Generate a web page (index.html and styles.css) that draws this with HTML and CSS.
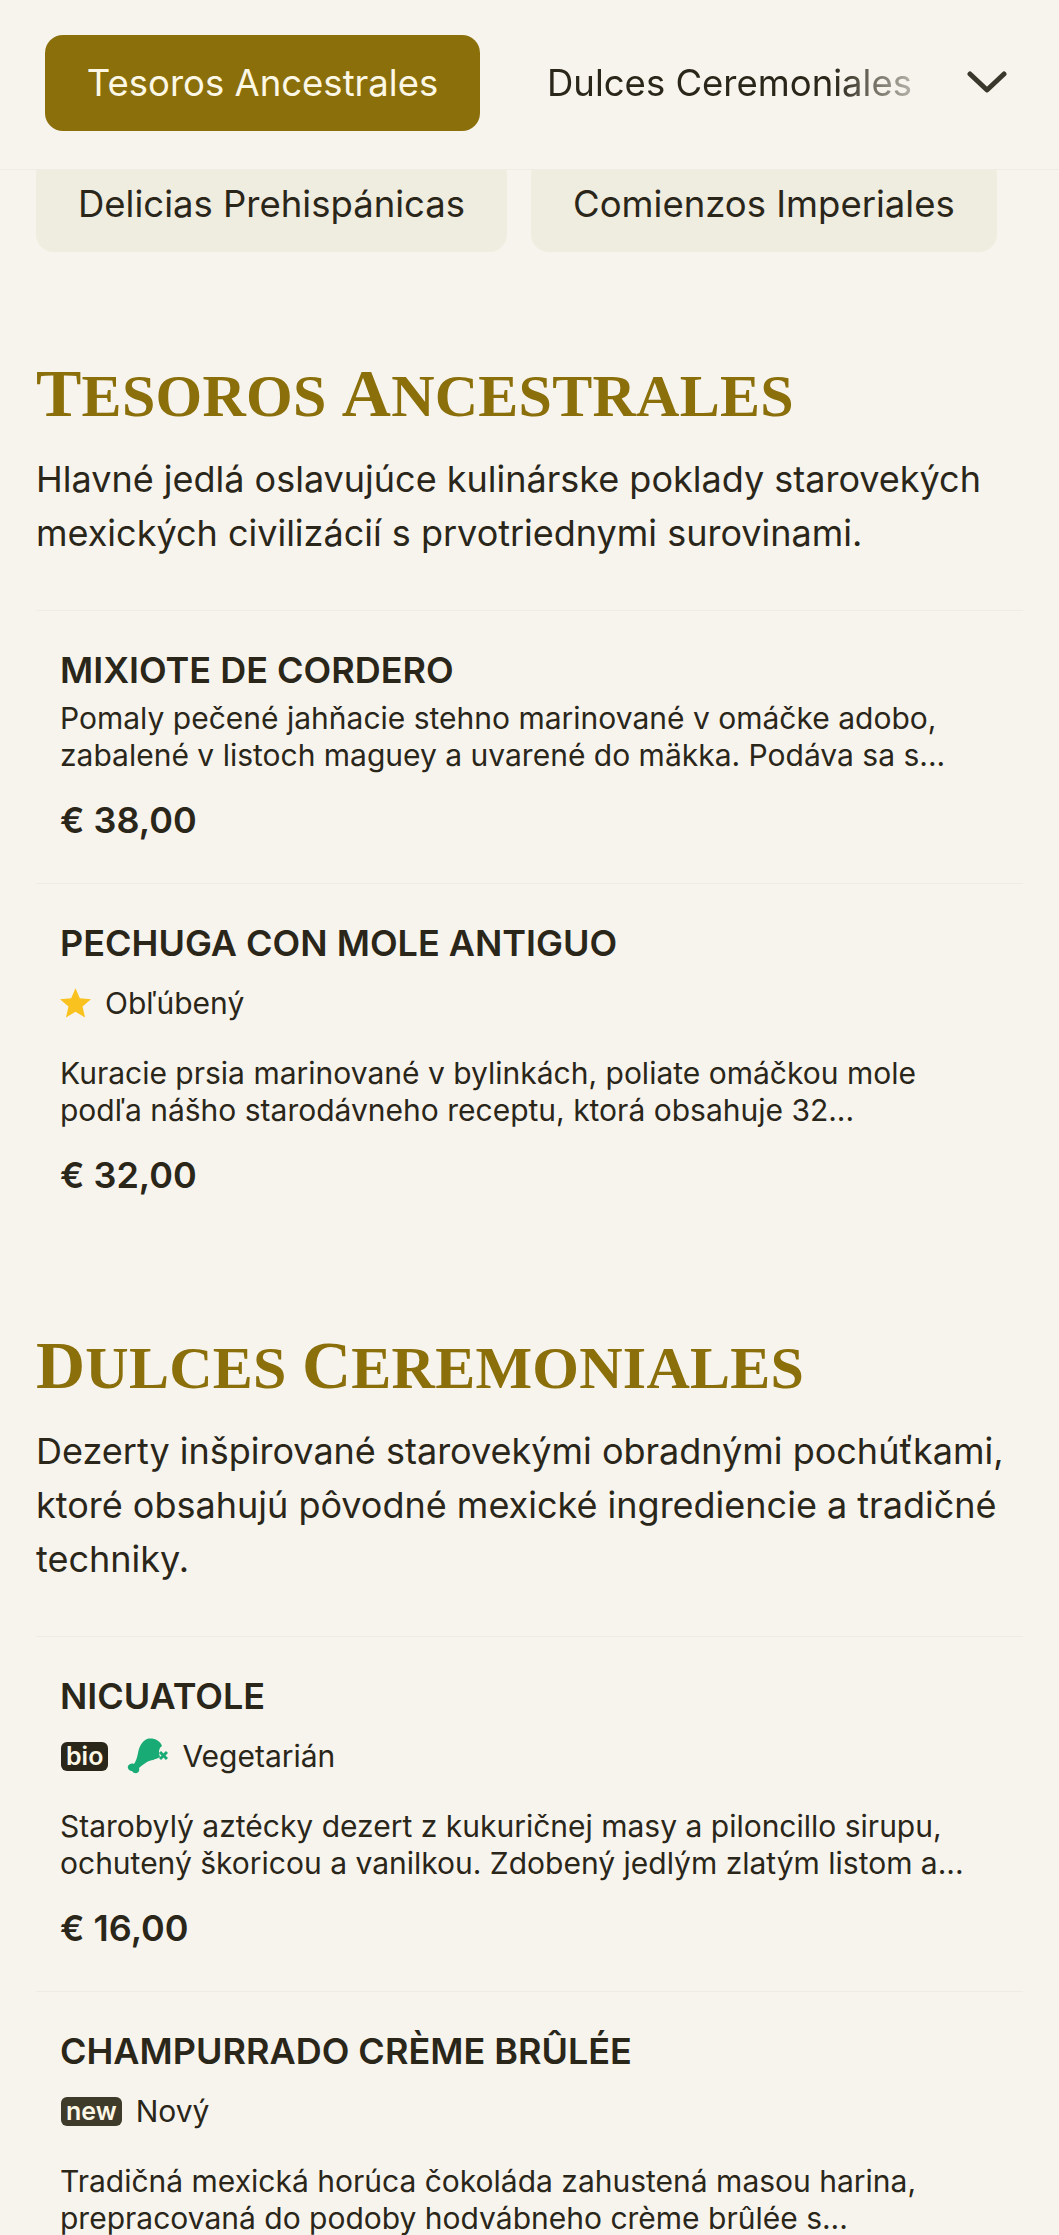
FILE: index.html

```html
<!DOCTYPE html>
<html lang="sk">
<head>
  <meta charset="UTF-8" />
  <meta name="viewport" content="width=device-width, initial-scale=1.0" />
  <title>Menu</title>
  <link rel="stylesheet" href="styles.css">
</head>
<body>
  <header class="topbar">
    <button class="tab tab-active">Tesoros Ancestrales</button>
    <div class="tab-fade"><button class="tab">Dulces Ceremoniales</button></div>
    <button class="more" aria-label="Viac">
      <svg width="40" height="22" viewBox="0 0 40 22" fill="none" stroke="#3a372c" stroke-width="5" stroke-linecap="round" stroke-linejoin="round"><path d="M3 3 L20 19 L37 3" /></svg>
    </button>
  </header>

  <div class="chips">
    <a class="chip">Delicias Prehispánicas</a>
    <a class="chip">Comienzos Imperiales</a>
  </div>

  <section class="category">
    <h2><span class="cap">T</span>esoros <span class="cap">A</span>ncestrales</h2>
    <p class="lead">Hlavné jedlá oslavujúce kulinárske poklady starovekých mexických civilizácií s prvotriednymi surovinami.</p>

    <article class="dish">
      <h3>MIXIOTE DE CORDERO</h3>
      <p class="desc">Pomaly pečené jahňacie stehno marinované v omáčke adobo, zabalené v listoch maguey a uvarené do mäkka. Podáva sa s...</p>
      <div class="price">€ 38,00</div>
    </article>

    <article class="dish">
      <h3>PECHUGA CON MOLE ANTIGUO</h3>
      <div class="tags">
        <svg class="star" width="31" height="30" viewBox="0.5 0.5 23 22"><path fill="#f9c21f" d="M12 0.5 L15.2 8 L23.5 8.7 L17.2 14.1 L19.1 22.3 L12 18 L4.9 22.3 L6.8 14.1 L0.5 8.7 L8.8 8 Z" /></svg>
        <span>Obľúbený</span>
      </div>
      <p class="desc">Kuracie prsia marinované v bylinkách, poliate omáčkou mole podľa nášho starodávneho receptu, ktorá obsahuje 32...</p>
      <div class="price">€ 32,00</div>
    </article>
  </section>

  <section class="category">
    <h2><span class="cap">D</span>ulces <span class="cap">C</span>eremoniales</h2>
    <p class="lead">Dezerty inšpirované starovekými obradnými pochúťkami, ktoré obsahujú pôvodné mexické ingrediencie a tradičné techniky.</p>

    <article class="dish">
      <h3>NICUATOLE</h3>
      <div class="tags">
        <span class="badge badge-bio">bio</span>
        <svg class="leg" width="41" height="37" viewBox="0 0 41 37">
          <path fill="#19ab75" d="M20 1 C26 -0.5 33 2 35 8 C32 10 31 14 33 19 C28 22 24 22 20 24 C17 26 14 28 12 30 C13 33 11 36 8 35 C6 35 5 33 5 33 C3 33 0 31 1 28 C2 26 5 25 7 26 C9 23 10 20 11 15 C12 9 15 3 20 1 Z" />
          <path stroke="#19ab75" stroke-width="3" d="M33 14 L40 21 M40 14 L33 21" />
        </svg>
        <span>Vegetarián</span>
      </div>
      <p class="desc">Starobylý aztécky dezert z kukuričnej masy a piloncillo sirupu, ochutený škoricou a vanilkou. Zdobený jedlým zlatým listom a...</p>
      <div class="price">€ 16,00</div>
    </article>

    <article class="dish">
      <h3>CHAMPURRADO CRÈME BRÛLÉE</h3>
      <div class="tags">
        <span class="badge badge-new">new</span>
        <span>Nový</span>
      </div>
      <p class="desc desc-last">Tradičná mexická horúca čokoláda zahustená masou harina, prepracovaná do podoby hodvábneho crème brûlée s...</p>
    </article>
  </section>
</body>
</html>
```

FILE: styles.css

```css
body {
  margin: 0;
  font-family: 'Inter', sans-serif;
  background-color: #f7f4ed;
  color: #2a2619;
}
button {
  font-family: inherit;
  border: none;
  background: none;
  color: inherit;
  cursor: pointer;
}
.topbar {
  position: relative;
  z-index: 2;
  display: flex;
  align-items: center;
  height: 169px;
  padding-left: 45px;
  background: #f7f4ed;
  border-bottom: 1px solid #efece4;
}
.tab {
  font-size: 36.5px;
  padding: 0;
  white-space: nowrap;
}
.tab-active {
  width: 435px;
  height: 96px;
  margin-top: -3px;
  background: #8b6f0a;
  color: #fdf8e6;
  border-radius: 18px;
}
.tab-fade {
  width: 367px;
  margin-left: 67px;
  margin-top: -3px;
  overflow: hidden;
  -webkit-mask-image: linear-gradient(to right, #000 78%, rgba(0, 0, 0, 0.3) 100%);
  mask-image: linear-gradient(to right, #000 78%, rgba(0, 0, 0, 0.3) 100%);
}
.more {
  display: flex;
  padding: 0;
  margin-left: 53px;
  margin-top: -6px;
}
.chips {
  display: flex;
  gap: 24px;
  padding-left: 36px;
  margin-top: -14px;
}
.chip {
  height: 96px;
  line-height: 96px;
  padding: 0 42px;
  font-size: 36.5px;
  background: #efece0;
  border-radius: 18px;
  white-space: nowrap;
}
.category {
  padding: 0 36px;
}
.chips + .category {
  margin-top: 104px;
}
.category + .category {
  margin-top: 90px;
}
.category h2 {
  margin: 0;
  font-family: 'Liberation Serif', serif;
  text-transform: uppercase;
  font-size: 60px;
  font-weight: 700;
  letter-spacing: 0.25px;
  line-height: 80px;
  color: #8b6f0a;
}
.cap {
  font-size: 68px;
  line-height: 1;
}
.lead {
  margin: 16px 0 50px;
  font-size: 36px;
  line-height: 54px;
}
.dish {
  padding: 37px 24px 41px;
  border-top: 1px solid #efece4;
}
.dish h3 {
  margin: 0;
  font-size: 36px;
  font-weight: 600;
  line-height: 44px;
}
.desc {
  margin: 8px 0 24px;
  font-size: 30px;
  line-height: 37px;
}
.tags + .desc {
  margin-top: 30px;
}
.desc-last {
  margin-bottom: -41px;
}
.price {
  font-size: 36px;
  font-weight: 600;
  line-height: 44px;
}
.tags {
  display: flex;
  align-items: center;
  gap: 14px;
  height: 44px;
  margin-top: 16px;
  font-size: 30px;
}
.badge {
  display: inline-block;
  margin-left: 1px;
  padding: 0 5px;
  line-height: 29px;
  border-radius: 6px;
  font-size: 25px;
  font-weight: 600;
  color: #fdf8e6;
}
.badge-bio {
  background: #2a2619;
}
.badge-new {
  background: #3f3b2b;
}
.leg {
  margin-left: 5px;
}
```
